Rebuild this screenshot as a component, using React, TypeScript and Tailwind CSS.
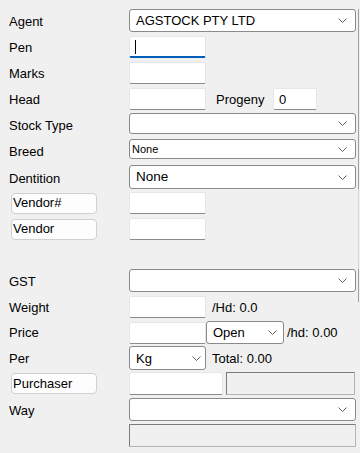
import React from "react";

const Chevron = () => (
  <svg width="9" height="5" viewBox="0 0 9 5" className="shrink-0">
    <path d="M0.5 0.5 L4.5 4.5 L8.5 0.5" fill="none" stroke="#606060" strokeWidth="1" />
  </svg>
);

const Label = ({ children, dy = 0 }: { children: React.ReactNode; dy?: number }) => (
  <div className="w-[129px] shrink-0 pl-[9px] text-[13px] text-black leading-none" style={dy ? { marginTop: dy * 2 } : undefined}>
    {children}
  </div>
);

const BtnLabel = ({ children }: { children: React.ReactNode }) => (
  <div className="w-[129px] shrink-0 pl-[11px]">
    <div className="w-[86px] h-[21px] rounded-[4px] border border-[#d0d0d0] bg-[#fdfdfd] pl-[1px] flex items-center text-[13px] text-black">
      {children}
    </div>
  </div>
);

const TextBox = ({ w = 77, h = 22, children, focused }: { w?: number; h?: number; children?: React.ReactNode; focused?: boolean }) => (
  <div
    className={
      "bg-white rounded-[2px] border border-[#e6e6e6] flex items-center text-[13px] " +
      (focused ? "border-b-2 border-b-[#005fb8]" : "border-b-[#8a8a8a]")
    }
    style={{ width: w, height: h }}
  >
    {children}
  </div>
);

const Drop = ({ w = 227, h = 23, children, small, pl = 6, chevRight = 8 }: { w?: number; h?: number; children?: React.ReactNode; small?: boolean; pl?: number; chevRight?: number }) => (
  <div
    className={"bg-white rounded-[3px] border border-[#8a8a8a] flex items-center justify-between text-black " + (small ? "text-[11px]" : "text-[13px]")}
    style={{ width: w, height: h, paddingLeft: pl, paddingRight: chevRight }}
  >
    <span className="leading-none">{children}</span>
    <Chevron />
  </div>
);

const Disabled = ({ w = 227, h = 23 }: { w?: number; h?: number }) => (
  <div
    className="bg-[#f0f0f0] border border-[#b4b4b4] border-t-[#7a7a7a] border-l-[#7a7a7a] rounded-[1px]"
    style={{ width: w, height: h }}
  />
);

export default function App() {
  return (
    <div
      className="relative w-[360px] h-[453px] bg-[#f0f0f0] overflow-hidden pt-[9px]"
      style={{ fontFamily: '"Liberation Sans", Arial, sans-serif' }}
    >
      {/* Agent */}
      <div className="flex items-center h-[23px]">
        <Label dy={0.5}>Agent</Label>
        <Drop>AGSTOCK PTY LTD</Drop>
      </div>
      {/* Pen */}
      <div className="flex items-center h-[22px] mt-[4px]">
        <Label dy={0.5}>Pen</Label>
        <TextBox focused>
          <div className="ml-[5px] w-[1px] h-[14px] bg-black" />
        </TextBox>
      </div>
      {/* Marks */}
      <div className="flex items-center h-[22px] mt-[4px]">
        <Label>Marks</Label>
        <TextBox />
      </div>
      {/* Head */}
      <div className="flex items-center h-[22px] mt-[4px]">
        <Label>Head</Label>
        <TextBox />
        <div className="ml-[10px] w-[57px] text-[13px] leading-none">Progeny</div>
        <TextBox w={44}>
          <span className="pl-[5px] leading-none">0</span>
        </TextBox>
      </div>
      {/* Stock Type */}
      <div className="flex items-center h-[21px] mt-[3px]">
        <Label dy={1.5}>Stock Type</Label>
        <Drop h={21} />
      </div>
      {/* Breed */}
      <div className="flex items-center h-[20px] mt-[5px]">
        <Label dy={2.5}>Breed</Label>
        <Drop h={20} small pl={2}>None</Drop>
      </div>
      {/* Dentition */}
      <div className="flex items-center h-[24px] mt-[6px]">
        <Label dy={1}>Dentition</Label>
        <Drop h={24} pl={6}>
          <span className="text-[13.5px]">None</span>
        </Drop>
      </div>
      {/* Vendor# */}
      <div className="flex items-center h-[22px] mt-[3px]">
        <BtnLabel>Vendor#</BtnLabel>
        <TextBox />
      </div>
      {/* Vendor */}
      <div className="flex items-center h-[22px] mt-[4px]">
        <BtnLabel>Vendor</BtnLabel>
        <TextBox />
      </div>
      {/* GST */}
      <div className="flex items-center h-[23px] mt-[29px]">
        <Label dy={0.5}>GST</Label>
        <Drop />
      </div>
      {/* Weight */}
      <div className="flex items-center h-[22px] mt-[4px]">
        <Label dy={0.5}>Weight</Label>
        <TextBox />
        <span className="ml-[6px] text-[13px] leading-none">/Hd: 0.0</span>
      </div>
      {/* Price */}
      <div className="flex items-center h-[23px] mt-[3px]">
        <Label>Price</Label>
        <TextBox />
        <Drop w={78} h={23} pl={6} chevRight={6}>Open</Drop>
        <span className="ml-[3px] text-[13px] leading-none">/hd: 0.00</span>
      </div>
      {/* Per */}
      <div className="flex items-center h-[24px] mt-[2px]">
        <Label>Per</Label>
        <Drop w={77} h={24} pl={6} chevRight={4}>Kg</Drop>
        <span className="ml-[6px] text-[13px] leading-none">Total: 0.00</span>
      </div>
      {/* Purchaser */}
      <div className="flex items-center h-[23px] mt-[2px]">
        <BtnLabel>Purchaser</BtnLabel>
        <TextBox w={94} h={23} />
        <div className="ml-[3px]">
          <Disabled w={129} h={23} />
        </div>
      </div>
      {/* Way */}
      <div className="flex items-center h-[23px] mt-[3px]">
        <Label dy={0.5}>Way</Label>
        <Drop />
      </div>
      {/* Disabled bottom */}
      <div className="flex items-center h-[23px] mt-[3px]">
        <div className="w-[129px] shrink-0" />
        <Disabled />
      </div>

      {/* scrollbar edge */}
      <div className="absolute left-[358px] top-[9px] w-[1px] h-[180px] bg-[#a0a0a0]" />
      <div className="absolute left-[358px] top-[189px] w-[1px] h-[80px] bg-[#d8d8d8]" />
      <div className="absolute left-[358px] top-[269px] w-[1px] h-[33px] bg-[#a0a0a0]" />
    </div>
  );
}
